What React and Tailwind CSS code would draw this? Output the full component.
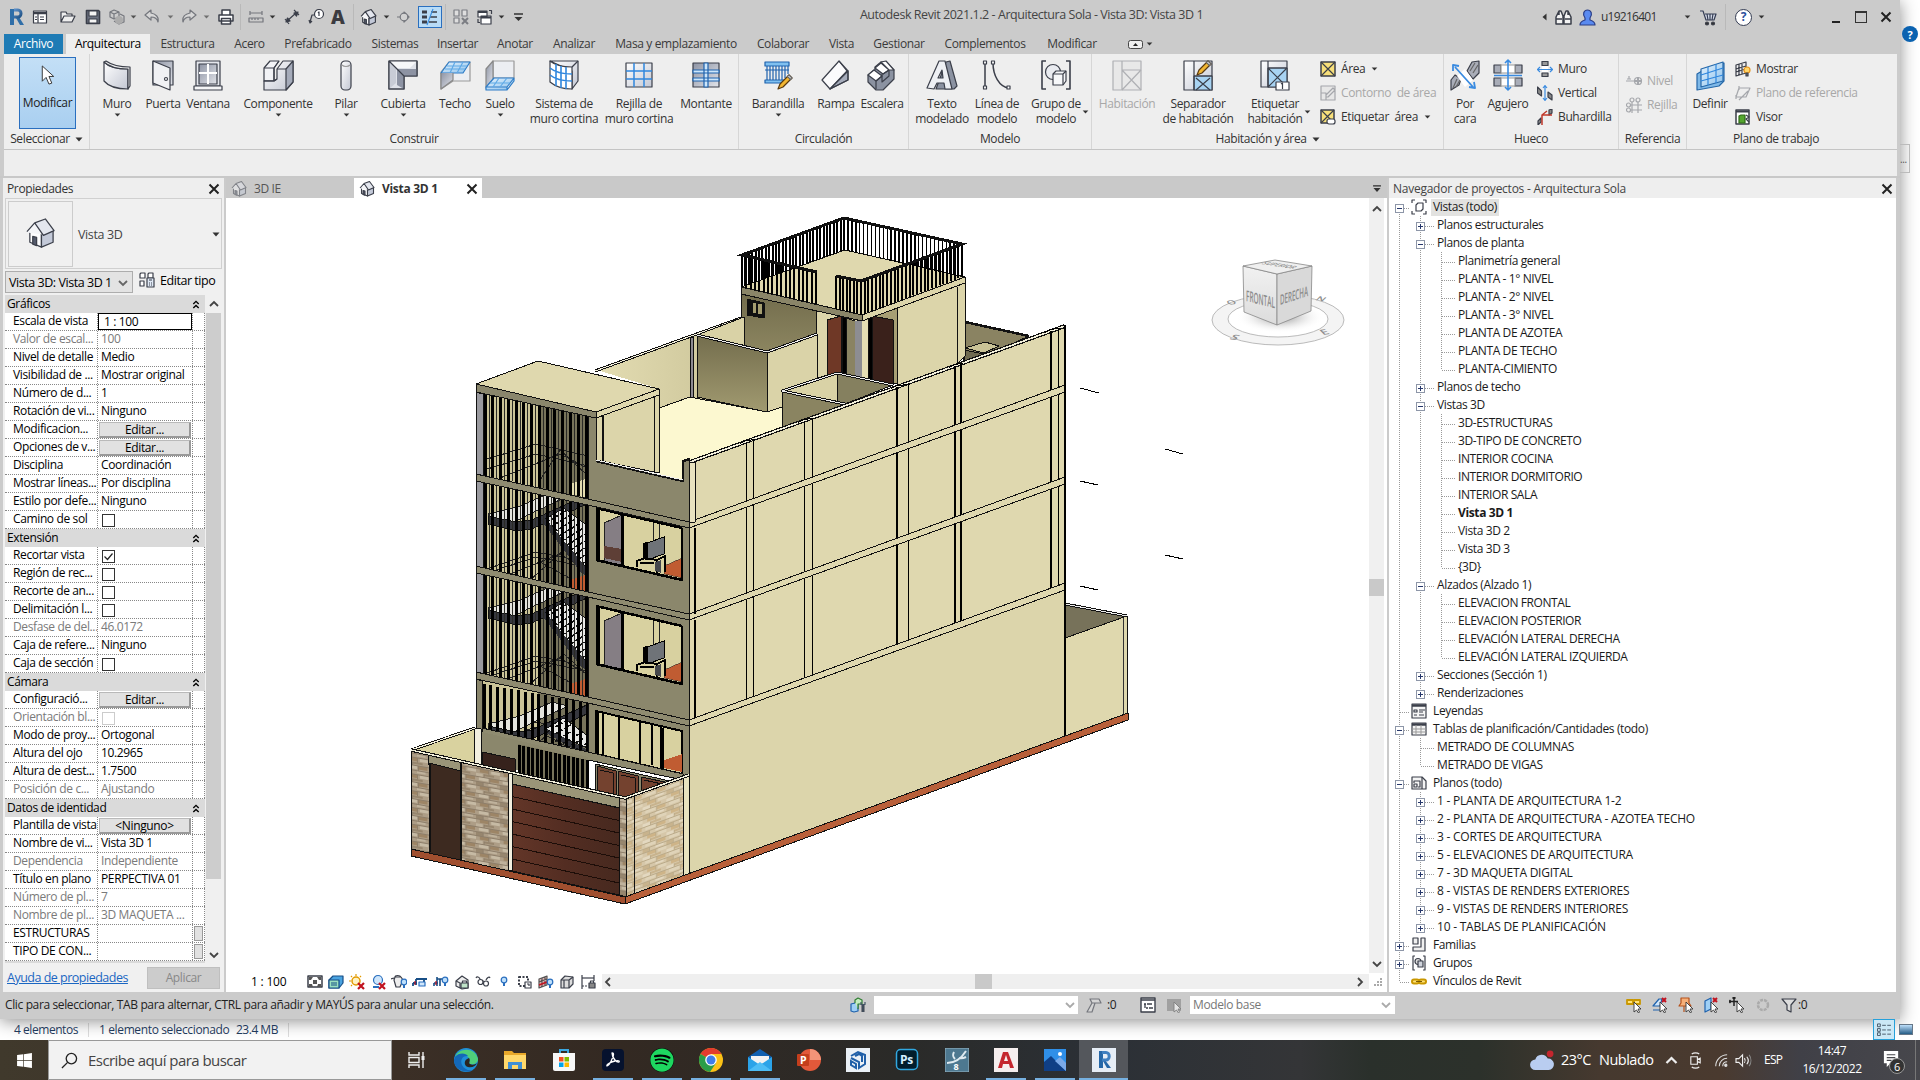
import React from "react";
import { FaSpotify, FaWindows } from "react-icons/fa";

const INK = "#3b3f4a";

/* ---------- Small helpers ---------- */

const Caret = ({ className = "" }) => (
  <svg viewBox="0 0 8 5" className={`h-[4px] w-[7px] shrink-0 ${className}`}>
    <path d="M0.5 0.5h7L4 4.5z" fill="#333" />
  </svg>
);

const Cross = ({ className = "" }) => (
  <svg viewBox="0 0 12 12" className={`size-[12px] shrink-0 ${className}`}>
    <path d="M1.5 1.5l9 9M10.5 1.5l-9 9" stroke="#222" strokeWidth="2" fill="none" />
  </svg>
);

const Chevron = ({ dir = "up", className = "", color = "#444" }) => {
  const d = {
    up: "M2 8l4-4 4 4",
    down: "M2 4l4 4 4-4",
    left: "M8 2L4 6l4 4",
    right: "M4 2l4 4-4 4",
  };
  return (
    <svg viewBox="0 0 12 12" className={`size-[12px] shrink-0 ${className}`}>
      <path d={d[dir]} stroke={color} strokeWidth="1.8" fill="none" />
    </svg>
  );
};

const Svg = ({ s = 16, className = "", children }) => (
  <svg
    viewBox={`0 0 ${s} ${s}`}
    width={s}
    height={s}
    className={`shrink-0 ${className}`}
    fill="none"
    stroke={INK}
    strokeWidth="1.2"
    strokeLinejoin="round"
  >
    {children}
  </svg>
);

const House = ({ size = 17, faded }) => (
  <svg
    viewBox="0 0 32 32"
    width={size}
    height={size}
    className={`shrink-0 ${faded ? "opacity-50" : ""}`}
    strokeLinejoin="round"
    stroke={INK}
    strokeWidth={size > 20 ? 1.3 : 2.2}
  >
    <path d="M5 14v11l12 5V17L10 7z" fill="#fdfdfe" />
    <path d="M17 17v13l12-5V13z" fill="#c3c9d8" />
    <path d="M2 15L10 5l8 12z" fill="#f4f5f8" stroke="none" />
    <path d="M2 14L10 5l9 13 11-5L21 1 10 5" fill="#e3e6ee" />
    <path d="M8 19v8l4 1.500V20z" fill="#555b6c" />
  </svg>
);

/* ---------- Title bar ---------- */

const Sep = ({ className = "" }) => (
  <div className={`h-[26px] w-px shrink-0 bg-[#b9b9b9] ${className}`} />
);

const QuickAccess = () => (
  <div className="flex h-[34px] w-[640px] items-center pl-[8px]">
    <svg viewBox="0 0 17 20" className="h-[20px] w-[17px]">
      <defs>
        <linearGradient id="rg" x1="0" y1="0" x2="1" y2="1">
          <stop offset="0" stopColor="#5b8fc9" />
          <stop offset="1" stopColor="#1f5286" />
        </linearGradient>
      </defs>
      <path d="M2 2h4v16H2zM11 10l5 8h-4l-4-7z" fill="#2f6ea8" />
      <path d="M6 3h4a3 3.500 0 010 7H6" fill="none" stroke="url(#rg)" strokeWidth="3" />
    </svg>
    <Svg className="ml-[7px]">
      <rect x="1.500" y="2" width="13" height="12" fill="#fff" />
      <path d="M1.500 4h13" strokeWidth="2.500" />
      <path d="M6 5v9M8 8h4M8 10.500h4M3 8h2M3 10.500h2" />
    </Svg>
    <Svg className="ml-[12px]">
      <path d="M1 13V3h5l1 2h5v2M1 13l3-6h11l-3 6z" fill="#eee" />
    </Svg>
    <Svg className="ml-[9px]">
      <path d="M1.500 1.500h12l1 1v12h-13z" fill="#6d7381" strokeWidth="1.600" />
      <path d="M4 2h8v5H4zM4 10h8v4H4z" fill="#f4f4f4" />
    </Svg>
    <Svg className="ml-[8px] opacity-60">
      <path d="M5 1l5 2v5L5 10 1 8V3zM11 5l4 2v6l-5 2-5-3" fill="#ccc" />
      <path d="M1 3l4 2 5-2M5 5v5" />
      <circle cx="10" cy="11" r="4" fill="#999" stroke="none" />
    </Svg>
    <Caret className="ml-[5px] opacity-80" />
    <Svg className="ml-[7px] opacity-60">
      <path d="M7 1L1 6l6 5V8c4 0 6 1 7 5 1-5-2-8-7-9z" fill="#e0e0e0" />
    </Svg>
    <Caret className="ml-[7px] opacity-60" />
    <Svg className="ml-[7px] opacity-60">
      <path d="M9 1l6 5-6 5V8c-4 0-6 1-7 5-1-5 2-8 7-9z" fill="#e0e0e0" />
    </Svg>
    <Caret className="ml-[6px] opacity-60" />
    <Svg className="ml-[8px]">
      <path d="M4 6V1h8v5M1 6h14v6H1zM3.500 9.500h9V15h-9z" fill="#fff" strokeWidth="1.500" />
    </Svg>
    <Sep className="ml-[6px]" />
    <Svg className="ml-[7px] opacity-60">
      <path d="M2 4h12M2 2v4M14 2v4M1 9h14v4H1zM4 9v2M7 9v2M10 9v2" />
    </Svg>
    <Caret className="ml-[5px]" />
    <Svg className="ml-[8px]">
      <path d="M3 12L12 4M1 10l4 5M10 1l5 5" />
      <path d="M2 13l1.500-4 2.500 3zM14 3l-4 1 2.500 3z" fill={INK} />
    </Svg>
    <Svg className="ml-[8px]">
      <circle cx="11" cy="5" r="4.500" fill="#fff" />
      <path d="M6.500 6H4L2 13M1 11l1 3 2-2" />
      <path d="M10 4l1-1v4" strokeWidth="1.200" />
    </Svg>
    <span className="ml-[7px] w-[16px] font-['Open_Sans',sans-serif] text-[19px] leading-none font-extrabold text-[#3b3b40]">
      A
    </span>
    <Sep className="ml-[6px]" />
    <span className="ml-[6px]">
      <House size={17} />
    </span>
    <Caret className="ml-[6px]" />
    <Svg className="ml-[6px] opacity-60">
      <path d="M1 8h3M8 3l5 5-5 5z" fill="#999" />
      <circle cx="8" cy="8" r="3.800" fill="#d8d8d8" />
    </Svg>
    <div className="ml-[6px] flex h-[22px] w-[24px] items-center justify-center border border-[#2a6fbf] bg-[#b9dcf7]">
      <Svg s={18}>
        <path d="M1 4h5M1 9h5M1 14h5" strokeWidth="3" />
        <path d="M10 4h6M9 9h7M8 14h8" strokeWidth="1.400" />
        <path d="M12 1L6 17" stroke="#3b8fe0" />
      </Svg>
    </div>
    <Sep className="ml-[3px]" />
    <Svg className="ml-[7px] opacity-55">
      <path d="M1 1h5v6H1zM9 1h5v6H9zM1 9h5v5H1z" fill="#eee" />
      <path d="M9 9l6 6M15 9l-6 6" strokeWidth="2" />
    </Svg>
    <Svg className="ml-[8px]">
      <path d="M1 2h9v6H1zM4 7h10v8H4z" fill="#fff" />
      <path d="M1 3h9M4 8.500h10" strokeWidth="2" />
      <path d="M12 1.500h2.500V5M1 10v3.500h2" />
    </Svg>
    <Caret className="ml-[5px]" />
    <svg viewBox="0 0 9 8" className="ml-[9px] h-[8px] w-[9px]">
      <path d="M0 1h9" stroke="#333" strokeWidth="1.500" />
      <path d="M0.500 4h8L4.500 8z" fill="#333" />
    </svg>
  </div>
);

const TitleBar = () => (
  <div className="flex h-[34px] shrink-0">
    <QuickAccess />
    <div className="w-[783px] pt-[6px] text-center text-[12.500px] leading-[18px] tracking-[-0.450px] text-[#444]">
      Autodesk Revit 2021.1.2 - Arquitectura Sola - Vista 3D: Vista 3D 1
    </div>
    <div className="flex flex-1 items-center pl-[119px]">
      <svg viewBox="0 0 5 8" className="h-[8px] w-[5px]">
        <path d="M4.500 0.500v7L0.500 4z" fill="#333" />
      </svg>
      <Svg s={17} className="ml-[8px]">
        <path d="M1 15V8l3-6h2l2 5v8H1zM9 15V7l2-5h2l3 6v7zM1 10h6M10 10h6M4 2v4M13 2v4" fill="#f3f3f3" strokeWidth="1.500" />
      </Svg>
      <Svg s={17} className="ml-[7px]">
        <path d="M1 16c0-3 2-4 5-5V9C3 5 5 1 8.500 1S14 5 11 9v2c3 1 5 2 5 5z" fill="#5a8af0" stroke="#2b3e86" />
      </Svg>
      <span className="ml-[5px] w-[76px] tracking-[-0.750px] text-[#333]">u19216401</span>
      <Caret className="ml-[7px]" />
      <Svg s={17} className="ml-[9px]">
        <path d="M0 2h3l3 9h8l2-6H5M7 5l1 6M10 5v6M13 5l-1 6" stroke="#333b52" fill="#d5dbe8" />
        <circle cx="7" cy="14.500" r="1.500" fill="#333" />
        <circle cx="13" cy="14.500" r="1.500" fill="#333" />
      </Svg>
      <Sep className="ml-[8px]" />
      <div className="ml-[9px] flex size-[17px] items-center justify-center rounded-full border-[1.500px] border-[#333b52] bg-white text-[12px] leading-none font-bold text-[#2b4f9c]">
        ?
      </div>
      <Caret className="ml-[6px]" />
      <div className="mt-[10px] ml-[67px] h-[2px] w-[8px] bg-[#222]" />
      <div className="ml-[15px] size-[12px] border border-t-2 border-[#333]" />
      <Cross className="ml-[13px]" />
    </div>
  </div>
);

const Tab = ({ className, children }) => (
  <div className={`flex h-[20px] shrink-0 items-center justify-center whitespace-nowrap ${className}`}>
    {children}
  </div>
);

const RibbonTabs = () => (
  <div className="flex h-[20px] shrink-0 pl-[4px] text-[#3a3a3a]">
    <Tab className="w-[59px] bg-[#1e7bb5] text-white">Archivo</Tab>
    <Tab className="ml-[3px] w-[84px] bg-[#eee] text-black">Arquitectura</Tab>
    <Tab className="w-[75px]">Estructura</Tab>
    <Tab className="w-[49px]">Acero</Tab>
    <Tab className="w-[88px]">Prefabricado</Tab>
    <Tab className="w-[66px]">Sistemas</Tab>
    <Tab className="w-[59px]">Insertar</Tab>
    <Tab className="w-[56px]">Anotar</Tab>
    <Tab className="w-[62px]">Analizar</Tab>
    <Tab className="w-[142px]">Masa y emplazamiento</Tab>
    <Tab className="w-[72px]">Colaborar</Tab>
    <Tab className="w-[45px]">Vista</Tab>
    <Tab className="w-[70px]">Gestionar</Tab>
    <Tab className="w-[102px]">Complementos</Tab>
    <Tab className="w-[72px]">Modificar</Tab>
    <Tab className="ml-[20px] w-[15px]">
      <svg viewBox="0 0 15 9" className="h-[9px] w-[15px]">
        <rect x="0.500" y="0.500" width="14" height="8" rx="2" fill="#eee" stroke="#444" />
        <path d="M5 6l2.500-3L10 6z" fill="#222" />
      </svg>
    </Tab>
    <Tab className="ml-[3px]">
      <Caret />
    </Tab>
  </div>
);

/* ---------- Ribbon icons (32px) ---------- */

const Pencil = ({ x = 0, y = 0 }) => (
  <g transform={`translate(${x} ${y})`}>
    <path d="M0 14l2-5L11 0l3 3-9 9z" fill="#f2b632" stroke="#5a3a10" />
    <path d="M9.500 1.500L11 0l3 3-1.500 1.500z" fill="#f4f4f4" stroke="#666" />
  </g>
);

const Grad = () => (
  <svg width="0" height="0" className="absolute">
    <defs>
      <linearGradient id="mt" x1="0" y1="0" x2="1" y2="1">
        <stop offset="0" stopColor="#ffffff" />
        <stop offset="1" stopColor="#c3c7d3" />
      </linearGradient>
      <linearGradient id="dk" x1="0" y1="0" x2="1" y2="1">
        <stop offset="0" stopColor="#8e94a4" />
        <stop offset="1" stopColor="#e2e4ea" />
      </linearGradient>
      <linearGradient id="bl" x1="0" y1="0" x2="1" y2="1">
        <stop offset="0" stopColor="#e6f3fd" />
        <stop offset="1" stopColor="#8cc1ec" />
      </linearGradient>
    </defs>
  </svg>
);

const big = {
  muro: (
    <Svg s={32}>
      <path d="M3 3c5 5 14 7 24 7v20C17 30 8 28 3 22z" fill="url(#mt)" />
      <path d="M3 3l2-1c7 5 14 6 24 6v19l-2 3V10C17 10 8 8 3 3z" fill="#eee" />
    </Svg>
  ),
  puerta: (
    <Svg s={32}>
      <path d="M6 2h20v24H6z" fill="url(#dk)" />
      <path d="M6 2l17 7v22L6 24z" fill="#f0f1f4" />
      <circle cx="19" cy="20" r="1.500" fill="#fff" />
    </Svg>
  ),
  ventana: (
    <Svg s={32}>
      <path d="M4 2h24v25H4z" fill="#e4e6ec" />
      <path d="M7 5h18v20H7z" fill="url(#dk)" />
      <path d="M16 5v20M7 14h18" stroke="#fff" strokeWidth="2" />
      <path d="M2 27h28v4H2z" fill="#f4f5f7" />
    </Svg>
  ),
  componente: (
    <Svg s={32}>
      <path d="M2 9l6-7h9l-5 7v13H2z" fill="#f2f3f6" />
      <path d="M15 10l6-8h10v21l-7 8H2v-9h10l3-2z" fill="url(#mt)" />
      <path d="M24 10l7-8v21l-7 8z" fill="#a5abba" />
      <path d="M2 9h10l5-7M15 10h9M12 22h-10M12 9v13l3-2" />
    </Svg>
  ),
  pilar: (
    <Svg s={32}>
      <rect x="11" y="2" width="10" height="29" rx="4" fill="url(#mt)" />
      <path d="M12 6c2 2 6 2 8 0" stroke="#999" />
    </Svg>
  ),
  cubierta: (
    <Svg s={32}>
      <path d="M2 2h28v15H17v13H2z" fill="#dfe2e9" />
      <path d="M2 2l8 8h20v7H17v13l-7-4V10z" fill="#8d93a3" stroke="none" />
      <path d="M2 2h28L23 9H10z" fill="#f6f7f9" stroke="none" />
      <path d="M2 2l7 8v14l-7 6z" fill="#c8ccd6" stroke="none" />
      <path d="M2 2h28v15H17v13H2zM2 2l15 15" />
    </Svg>
  ),
  techo: (
    <Svg s={32}>
      <path d="M2 13l8-10h21v19H14L2 30z" fill="#eceef2" stroke="#999" />
      <path d="M2 14l8-11h21l-7 11z" fill="url(#bl)" stroke="#2f7dc7" />
      <path d="M8 7h20M6 10h20M16 3l-5 11M24 3l-6 11" stroke="#5fa9e6" />
      <path d="M2 14v16l12-9v-7" fill="url(#dk)" stroke="#888" />
    </Svg>
  ),
  suelo: (
    <Svg s={32}>
      <path d="M9 2h21v17H9z" fill="#eceef2" stroke="#999" />
      <path d="M2 10l7-8v18l-7 9z" fill="url(#dk)" stroke="#888" />
      <path d="M2 28l8-9h20l-7 9zM2 28h21v3H2zM23 31l7-9v-3" fill="url(#bl)" stroke="#2f7dc7" />
      <path d="M6 24h20M15 19l-6 9M23 19l-7 9" stroke="#5fa9e6" />
    </Svg>
  ),
  sistema: (
    <Svg s={32}>
      <path d="M2 2h28v20l-6 8V12z" fill="url(#mt)" />
      <path d="M2 2c6 5 13 6 22 6v22c-9 0-16-2-22-7z" fill="#fff" />
      <path d="M24 8l6-6" />
      <path d="M2 9c6 5 13 6 22 6M2 16c6 5 13 6 22 6M8 5v22M13 7v22M18 8v22" stroke="#2f86dd" strokeWidth="1.600" />
    </Svg>
  ),
  rejilla: (
    <Svg s={32}>
      <path d="M3 4h26v24H3z" fill="url(#mt)" />
      <path d="M3 12h26M3 20h26M11 4v24M21 4v24" stroke="#2f86dd" strokeWidth="1.500" />
    </Svg>
  ),
  montante: (
    <Svg s={32}>
      <path d="M3 4h26v24H3z" fill="url(#dk)" />
      <path d="M3 11h26v3H3zM3 19h26v3H3zM14 4h4v24h-4z" fill="#cde6fa" stroke="#1f62ad" />
    </Svg>
  ),
  barandilla: (
    <Svg s={32}>
      <path d="M3 3h24v4H3zM3 21h20v3H3z" fill="#7fc0f0" stroke="#1f62ad" />
      <path d="M5 7v14M8 7v14M11 7v14M14 7v14M17 7v14M20 7v14M23 7v12M26 7v8M3 11h24" stroke="#1f62ad" />
      <Pencil x={16} y={16} />
    </Svg>
  ),
  rampa: (
    <Svg s={32}>
      <path d="M2 21L19 2l8 10v0L10 30z" fill="#fbfbfc" />
      <path d="M10 30L28 12v9z" fill="#a5abba" />
      <path d="M19 2l9 10v9L10 30" />
    </Svg>
  ),
  escalera: (
    <Svg s={32}>
      <path d="M2 23V16l6-5 1 0V8l6-5h5l8 8v9L17 31h-7z" fill="#8b92a1" />
      <path d="M2 16l6-5 8 6-6 5zM9 9l6-5 8 7-6 4zM15 3l5-1 8 9-5 0z" fill="#fff" />
      <path d="M10 22l6-5v-2M10 22v8M17 15l6-4M16 17v6l7-6v-6" />
    </Svg>
  ),
  texto: (
    <Svg s={32}>
      <path d="M10 30L20 3l4-1 7 25-3 3z" fill="#8b92a1" />
      <path d="M1 29L13 2h6l7 28h-7l-1-6h-7l-3 6zM12 19h5l-1-8z" fill="#eef0f4" />
    </Svg>
  ),
  linea: (
    <Svg s={32}>
      <path d="M4 4v25M12 4c0 12 6 24 16 25" strokeWidth="1.500" />
      <path d="M2.500 2h3v3h-3zM2.500 27h3v3h-3zM10.500 2h3v3h-3zM26 27h3v3h-3z" fill="#fff" />
    </Svg>
  ),
  grupo: (
    <Svg s={32}>
      <path d="M6 2H2v28h4M26 2h4v28h-4" strokeWidth="1.600" />
      <circle cx="13" cy="13" r="7.500" fill="#e9ebf0" />
      <path d="M13 15l3-3h10v10l-3 4H13z" fill="#f7f8fa" />
      <path d="M13 15h10l3-3M23 15v11" />
    </Svg>
  ),
  habitacion: (
    <Svg s={32} className="opacity-35">
      <path d="M2 2h28v29H2z" fill="#ddd" />
      <path d="M11 2v29M11 11h19M11 11l19 20M30 11L11 31" />
    </Svg>
  ),
  separador: (
    <Svg s={32}>
      <path d="M2 2h28v29H2z" fill="url(#mt)" />
      <path d="M12 17h18v14H12z" fill="#a8d3f2" />
      <path d="M12 2v29M12 17h18M14 19l14 12M28 19L14 31" />
      <Pencil x={15} y={2} />
    </Svg>
  ),
  etiquetar: (
    <Svg s={32}>
      <path d="M2 2h26v26H2z" fill="url(#mt)" />
      <path d="M9 9h19v19H9z" fill="#a8d3f2" />
      <path d="M9 2v26M9 9h19M9 9l19 19M28 9L9 28" />
      <rect x="17" y="23" width="13" height="8" fill="#fff" />
      <path d="M22 25l1.500-1v6" />
    </Svg>
  ),
  cara: (
    <Svg s={32}>
      <path d="M18 12l5-9 7-1v12l-6 6zM2 31V21l4-5 6 4-2 6z" fill="#a9adb8" />
      <path d="M21 12l5-8M24 14l5-8M4 29l4-9M7 28l4-7" stroke="#666" />
      <path d="M8 17l8-7 8 11-8 7z" fill="#fff" stroke="none" />
      <path d="M6 8l18 20M4 12V6l6 1M20 28l6 1-1-6" stroke="#3a8be0" strokeWidth="1.800" />
    </Svg>
  ),
  agujero: (
    <Svg s={32}>
      <path d="M2 6h7v8H2zM23 6h7v8h-7zM2 19h7v8H2zM23 19h7v8h-7z" fill="#a9adb8" />
      <path d="M9 6h14v8H9zM9 19h14v8H9z" fill="#fff" stroke="#999" />
      <path d="M2 16.500h28M16 1v30M13 4l3-3 3 3M13 28l3 3 3-3" stroke="#3a8be0" strokeWidth="1.600" />
    </Svg>
  ),
  definir: (
    <Svg s={32}>
      <path d="M3 15l5-3 22-8v18l-5 5-22 4z" fill="#7fb9e8" stroke="#2567a8" />
      <path d="M7 10l22-7v19L7 28z" fill="url(#bl)" stroke="#2567a8" />
      <path d="M7 16l22-7M7 22l22-6M14 8v18M22 5v19" stroke="#2f86dd" />
    </Svg>
  ),
};

const small = {
  area: (
    <Svg>
      <path d="M1 1h14v14H1z" fill="#f7df7a" strokeWidth="1.500" />
      <path d="M1 1l14 14M15 1L1 15" />
    </Svg>
  ),
  contorno: (
    <Svg className="opacity-40">
      <path d="M1 1h14v14H1zM1 8h5v7M6 10l7-7 2 2-7 7H6z" fill="#ddd" />
    </Svg>
  ),
  etarea: (
    <Svg>
      <path d="M1 1h13v13H1z" fill="#f7df7a" strokeWidth="1.500" />
      <path d="M1 1l13 13M14 1L1 14" />
      <rect x="7" y="10" width="8" height="5" rx="2" fill="#fff" />
    </Svg>
  ),
  muro: (
    <Svg>
      <path d="M5 0.500h6v4H5zM5 12h6v3.500H5z" fill="#999" />
      <path d="M5 5h6v6H5z" fill="#fff" stroke="none" />
      <path d="M0 8.500h16M3 6L0.500 8.500 3 11M13 6l2.500 2.500L13 11" stroke="#3a8be0" />
    </Svg>
  ),
  vertical: (
    <Svg>
      <path d="M0.500 2l4 4v5l-4-3zM11 7l4 3v5l-4-3z" fill="#888" />
      <path d="M8 0.500v15M6 3l2-2.500L10 3M6 13l2 2.500 2-2.500" stroke="#3a8be0" />
    </Svg>
  ),
  buhardilla: (
    <Svg>
      <path d="M1 12l3-3v4l-3 3zM12 1l3-1v4l-3 2z" fill="#888" />
      <path d="M5 16V6h10M5 6l5-4" stroke="#c0392b" strokeWidth="1.500" />
    </Svg>
  ),
  nivel: (
    <Svg className="opacity-40">
      <path d="M0 8h9M3 3v3M1 6h4" />
      <circle cx="12" cy="8" r="3.500" />
      <path d="M12 4v8M8 8h8" strokeWidth="2" />
    </Svg>
  ),
  rejilla: (
    <Svg className="opacity-40">
      <path d="M6 5v11M12 5v11M5 8h11M5 13h11" />
      <circle cx="6" cy="3" r="2" />
      <circle cx="12" cy="3" r="2" />
      <circle cx="2.500" cy="8" r="2" />
      <circle cx="2.500" cy="13" r="2" />
    </Svg>
  ),
  mostrar: (
    <Svg>
      <path d="M1 4l10-3v11L1 15zM4 3v11M7 2v11M1 8l10-3M1 11l10-3" />
      <circle cx="12" cy="9" r="3" fill="#ffd66b" stroke="#e8951c" />
      <path d="M11 12h2v3h-2z" fill="#777" />
    </Svg>
  ),
  plano: (
    <Svg className="opacity-40">
      <path d="M4 3h11l-4 9H1zM4 1v4M1 10v4M4 15l9-9" />
    </Svg>
  ),
  visor: (
    <Svg>
      <path d="M1 1h13v14H1z" fill="#fff" strokeWidth="1.500" />
      <path d="M1 2.500h13" strokeWidth="2" />
      <path d="M4 7l2-1h4v8H4z" fill="#55a630" stroke="#2f6b17" />
      <path d="M11 6l3 2-3 2 3 3" />
    </Svg>
  ),
};

const BigButton = ({ icon, lines, caret, sideCaret, disabled, className = "" }) => (
  <div className={`flex shrink-0 flex-col items-center pt-[5px] ${className}`}>
    {big[icon]}
    <div
      className={`relative mt-[5px] text-center leading-[15px] whitespace-nowrap ${
        disabled ? "text-[#a8a8a8]" : "text-[#333]"
      }`}
    >
      {lines.map((l) => (
        <div key={l}>{l}</div>
      ))}
      {sideCaret && <Caret className="absolute top-[14px] -right-[8px] h-[3px] w-[6px]" />}
    </div>
    {caret && <Caret className="mt-[2px] h-[3px] w-[6px]" />}
  </div>
);

const SmallButton = ({ icon, label, caret, disabled }) => (
  <div className={`flex h-[24px] items-center whitespace-pre ${disabled ? "text-[#a8a8a8]" : "text-[#333]"}`}>
    {small[icon]}
    <span className="ml-[5px]">{label}</span>
    {caret && <Caret className="ml-[6px] h-[3px] w-[6px]" />}
  </div>
);

const Panel = ({ title, caret, className, children }) => (
  <div className={`flex h-[95px] shrink-0 flex-col border-r border-[#d6d6d6] ${className}`}>
    <div className="flex h-[77px]">{children}</div>
    <div className="flex h-[16px] items-center justify-center gap-[5px] text-[#333]">
      {title}
      {caret && <Caret className="h-[5px] w-[8px]" />}
    </div>
  </div>
);

const Ribbon = () => (
  <div className="ml-[4px] flex h-[96px] w-[1893px] shrink-0 border-b border-[#c4c4c4] bg-[#eee]">
    <Panel title="Seleccionar" caret className="w-[86px]">
      <div className="mt-[3px] ml-[15px] flex h-[72px] w-[57px] flex-col items-center border border-[#2a6fbf] bg-gradient-to-b from-[#c3dff6] to-[#a9cff0] pt-[7px]">
        <svg viewBox="0 0 14 22" className="h-[21px] w-[14px]">
          <path d="M1 1v16l4-4 3 7 3-1-3-7h5z" fill="#fff" stroke="#333" />
        </svg>
        <div className="mt-[9px] leading-[15px] text-[#222]">Modificar</div>
      </div>
    </Panel>
    <Panel title="Construir" className="w-[649px]">
      <BigButton icon="muro" lines={["Muro"]} caret className="ml-[7px] w-[40px]" />
      <BigButton icon="puerta" lines={["Puerta"]} className="ml-[6px] w-[40px]" />
      <BigButton icon="ventana" lines={["Ventana"]} className="ml-[2px] w-[46px]" />
      <BigButton icon="componente" lines={["Componente"]} caret className="ml-[9px] w-[76px]" />
      <BigButton icon="pilar" lines={["Pilar"]} caret className="ml-[14px] w-[32px]" />
      <BigButton icon="cubierta" lines={["Cubierta"]} caret className="ml-[16px] w-[50px]" />
      <BigButton icon="techo" lines={["Techo"]} className="ml-[9px] w-[36px]" />
      <BigButton icon="suelo" lines={["Suelo"]} caret className="ml-[9px] w-[36px]" />
      <BigButton icon="sistema" lines={["Sistema de", "muro cortina"]} className="ml-[10px] w-[72px]" />
      <BigButton icon="rejilla" lines={["Rejilla de", "muro cortina"]} className="ml-[3px] w-[72px]" />
      <BigButton icon="montante" lines={["Montante"]} className="ml-[3px] w-[56px]" />
    </Panel>
    <Panel title="Circulación" className="w-[170px]">
      <BigButton icon="barandilla" lines={["Barandilla"]} caret className="ml-[11px] w-[56px]" />
      <BigButton icon="rampa" lines={["Rampa"]} className="ml-[10px] w-[40px]" />
      <BigButton icon="escalera" lines={["Escalera"]} className="ml-[3px] w-[46px]" />
    </Panel>
    <Panel title="Modelo" className="w-[183px]">
      <BigButton icon="texto" lines={["Texto", "modelado"]} className="ml-[5px] w-[56px]" />
      <BigButton icon="linea" lines={["Línea de", "modelo"]} className="ml-[4px] w-[46px]" />
      <BigButton icon="grupo" lines={["Grupo de", "modelo"]} sideCaret className="ml-[10px] w-[52px]" />
    </Panel>
    <Panel title="Habitación y área" caret className="w-[352px]">
      <BigButton icon="habitacion" lines={["Habitación"]} disabled className="ml-[5px] w-[60px]" />
      <BigButton icon="separador" lines={["Separador", "de habitación"]} className="ml-[4px] w-[74px]" />
      <BigButton icon="etiquetar" lines={["Etiquetar", "habitación"]} sideCaret className="ml-[10px] w-[60px]" />
      <div className="ml-[15px] flex flex-col pt-[3px]">
        <SmallButton icon="area" label="Área" caret />
        <SmallButton icon="contorno" label="Contorno  de área" disabled />
        <SmallButton icon="etarea" label="Etiquetar  área" caret />
      </div>
    </Panel>
    <Panel title="Hueco" className="w-[175px]">
      <BigButton icon="cara" lines={["Por", "cara"]} className="ml-[5px] w-[32px]" />
      <BigButton icon="agujero" lines={["Agujero"]} className="ml-[4px] w-[46px]" />
      <div className="ml-[6px] flex flex-col pt-[3px]">
        <SmallButton icon="muro" label="Muro" />
        <SmallButton icon="vertical" label="Vertical" />
        <SmallButton icon="buhardilla" label="Buhardilla" />
      </div>
    </Panel>
    <Panel title="Referencia" className="w-[68px]">
      <div className="ml-[7px] flex flex-col pt-[15px]">
        <SmallButton icon="nivel" label="Nivel" disabled />
        <SmallButton icon="rejilla" label="Rejilla" disabled />
      </div>
    </Panel>
    <Panel title="Plano de trabajo" className="w-[210px] border-r-0 pr-[32px]">
      <BigButton icon="definir" lines={["Definir"]} className="ml-[3px] w-[40px]" />
      <div className="ml-[5px] flex flex-col pt-[3px]">
        <SmallButton icon="mostrar" label="Mostrar" />
        <SmallButton icon="plano" label="Plano de referencia" disabled />
        <SmallButton icon="visor" label="Visor" />
      </div>
    </Panel>
  </div>
);

/* ---------- Properties palette ---------- */

const properties = [
  { head: "Gráficos" },
  { label: "Escala de vista", value: "1 : 100", type: "input" },
  { label: "Valor de escal...", value: "100", dim: true },
  { label: "Nivel de detalle", value: "Medio" },
  { label: "Visibilidad de ...", value: "Mostrar original" },
  { label: "Número de d...", value: "1" },
  { label: "Rotación de vi...", value: "Ninguno" },
  { label: "Modificacion...", value: "Editar...", type: "button" },
  { label: "Opciones de v...", value: "Editar...", type: "button" },
  { label: "Disciplina", value: "Coordinación" },
  { label: "Mostrar líneas...", value: "Por disciplina" },
  { label: "Estilo por defe...", value: "Ninguno" },
  { label: "Camino de sol", type: "check" },
  { head: "Extensión" },
  { label: "Recortar vista", type: "check", on: true },
  { label: "Región de rec...", type: "check" },
  { label: "Recorte de an...", type: "check" },
  { label: "Delimitación l...", type: "check" },
  { label: "Desfase de del...", value: "46.0172", dim: true },
  { label: "Caja de refere...", value: "Ninguno" },
  { label: "Caja de sección", type: "check" },
  { head: "Cámara" },
  { label: "Configuració...", value: "Editar...", type: "button" },
  { label: "Orientación bl...", type: "check", dim: true },
  { label: "Modo de proy...", value: "Ortogonal" },
  { label: "Altura del ojo", value: "10.2965" },
  { label: "Altura de dest...", value: "1.7500" },
  { label: "Posición de c...", value: "Ajustando", dim: true },
  { head: "Datos de identidad" },
  { label: "Plantilla de vista", value: "<Ninguno>", type: "button" },
  { label: "Nombre de vi...", value: "Vista 3D 1" },
  { label: "Dependencia", value: "Independiente", dim: true },
  { label: "Título en plano", value: "PERPECTIVA 01" },
  { label: "Número de pl...", value: "7", dim: true },
  { label: "Nombre de pl...", value: "3D MAQUETA ...", dim: true },
  { label: "ESTRUCTURAS", value: "", knob: true },
  { label: "TIPO DE CON...", value: "", knob: true },
];

const PropertyValue = ({ row }) => {
  if (row.type === "input")
    return (
      <div className="flex h-[17px] w-full items-center border border-black pl-[5px]">{row.value}</div>
    );
  if (row.type === "button")
    return (
      <div className="mt-[1px] ml-[1px] flex h-[16px] w-[92px] items-center justify-center border border-r-2 border-b-2 border-[#b9b9b9] border-r-[#999] border-b-[#999] bg-[#e1e1e1]">
        {row.value}
      </div>
    );
  if (row.type === "check")
    return (
      <svg viewBox="0 0 13 13" className="mt-[2px] ml-[4px] size-[13px]">
        <rect x="0.500" y="0.500" width="12" height="12" fill="#fff" stroke={row.dim ? "#ccc" : "#333"} />
        {row.on && <path d="M2.500 6.500l3 3 5-6" fill="none" stroke="#222" strokeWidth="1.200" />}
      </svg>
    );
  return <span className="pl-[3px]">{row.value}</span>;
};

const PropertyRow = ({ row }) => {
  if (row.head)
    return (
      <div className="flex h-[18px] items-center justify-between bg-[#dadada] pr-[5px] pl-[2px]">
        <span>{row.head}</span>
        <svg viewBox="0 0 8 10" className="h-[9px] w-[8px]">
          <path d="M1 4.500l3-3 3 3M1 9l3-3 3 3" fill="none" stroke="#000" strokeWidth="1.500" />
        </svg>
      </div>
    );
  return (
    <div className={`flex h-[18px] border-b border-dotted border-[#888] ${row.dim ? "text-[#7a7a7a]" : "text-black"}`}>
      <div className="flex w-[93px] items-center overflow-hidden border-r border-dotted border-[#888] pb-px pl-[8px] whitespace-nowrap">
        {row.label}
      </div>
      <div
        className={`flex w-[95px] items-center overflow-hidden border-r border-dotted border-[#888] whitespace-nowrap ${
          row.type ? "" : "pb-px"
        }`}
      >
        <PropertyValue row={row} />
      </div>
      <div className="w-[12px] border-r border-dotted border-[#888]">
        {row.knob && <div className="mt-px ml-px h-[15px] w-[9px] border border-[#999] bg-[#e1e1e1]" />}
      </div>
    </div>
  );
};

const Properties = () => (
  <div className="flex h-[814px] w-[221px] shrink-0 flex-col bg-[#f0f0f0] text-black">
    <div className="flex h-[20px] items-center justify-between bg-[#eee] pt-[2px] pr-[4px] pl-[4px] text-[#333]">
      <span>Propiedades</span>
      <Cross className="size-[11px]" />
    </div>
    <div className="ml-[2px] flex h-[71px] w-[217px] items-center border border-[#d0d0d0] pl-[2px]">
      <div className="flex h-[66px] w-[65px] items-center justify-center border border-[#ccc]">
        <House size={31} />
      </div>
      <span className="mt-[2px] ml-[5px] flex-1 text-[12.500px] text-[#444]">Vista 3D</span>
      <Caret className="mt-[2px] mr-[1px] h-[5px] w-[8px]" />
    </div>
    <div className="flex h-[26px] items-start pt-[2px] pl-[2px]">
      <div className="flex h-[22px] w-[128px] items-center justify-between border border-[#adadad] bg-[#e3e3e3] pt-px pr-[3px] pl-[3px] text-[12.500px] tracking-[-0.450px]">
        <span>Vista 3D: Vista 3D 1</span>
        <Chevron dir="down" color="#666" className="size-[11px]" />
      </div>
      <Svg className="mt-[1px] ml-[6px]">
        <path d="M1 2l1-1h4v5H1zM9 2l1-1h4v5H9zM1 9h4v5H1z" fill="#fff" />
        <path d="M8 6h7v9H8z" fill="#dfe8f5" />
        <path d="M10 8h3M10 11h1M12 11h1M10 13h1M12 13h1" />
      </Svg>
      <span className="mt-[2px] ml-[5px] text-[12.500px] tracking-[-0.450px]">Editar tipo</span>
    </div>
    <div className="flex h-[668px] pl-[2px]">
      <div className="w-[200px] bg-white">
        {properties.map((row, i) => (
          <PropertyRow key={i} row={row} />
        ))}
        <div className="h-[2px] bg-[#dadada]" />
      </div>
      <div className="ml-px flex w-[15px] flex-col items-center bg-[#f0f0f0]">
        <Chevron dir="up" className="mt-[3px] size-[11px]" />
        <div className="mt-[3px] h-[566px] w-[15px] bg-[#cdcdcd]" />
        <Chevron dir="down" className="mt-auto mb-[2px] size-[11px]" />
      </div>
    </div>
    <div className="flex flex-1 items-center pl-[4px]">
      <span className="text-[12.500px] tracking-[-0.500px] text-[#1a66c2] underline">Ayuda de propiedades</span>
      <div className="mr-[4px] ml-auto flex h-[22px] w-[73px] items-center justify-center border border-[#bfbfbf] bg-[#ccc] text-[#888]">
        Aplicar
      </div>
    </div>
  </div>
);

/* ---------- Building drawing ---------- */

const lerp = (a, b, t) => a + (b - a) * t;

// evenly spaced vertical bars between two slanted edges
const Bars = ({ x1, x2, top, bottom, n, w = 1.2, color = "#000" }) => (
  <g stroke={color} strokeWidth={w}>
    {Array.from({ length: n + 1 }, (_, i) => {
      const t = i / n;
      const x = lerp(x1, x2, t);
      return <line key={i} x1={x} x2={x} y1={lerp(top[0], top[1], t)} y2={lerp(bottom[0], bottom[1], t)} />;
    })}
  </g>
);

const StairFloor = ({ y, h }) => (
  <g>
    {/* floor edge and handrails seen through the bars */}
    <path
      d={`M484 ${y + h - 8}l52 -17 52 10M484 ${y + h - 12}l52 -18 30 6M500 ${y + h - 4}l60 -24 27 16M530 ${y + h - 2}l34 -30 22 20M540 ${y + h - 20}l44 24`}
      stroke="#222"
      fill="none"
    />
    {/* landing */}
    <path d={`M488 ${y + 24}l32 -8 32 -14 16 4 -38 18 -16 8 -26 -2z`} fill="#e4e4de" stroke="#222" />
    <path d={`M488 ${y + 26}l28 6 16 -2 57 -26v9l-57 26 -16 2 -28 -7z`} fill="#37383e" stroke="#111" />
    {/* flight of steps */}
    <path d={`M544 ${y + 30}l20 -12 24 18v${Math.min(44, h - 40)}z`} fill="#e9e9e6" stroke="#111" />
    <path d={`M541 ${y + 30}l4 -2 43 ${Math.min(52, h - 30)}v6l-6 -2z`} fill="#34353b" />
    {Array.from({ length: h > 60 ? 10 : 6 }, (_, i) => (
      <path
        key={i}
        d={`M${547 + i * 4} ${y + 32 + i * 4.6}l${Math.min(20, 588 - 547 - i * 4)} ${-Math.min(12, (41 - i * 4) * 0.6)}`}
        stroke="#111"
        strokeWidth="1.5"
        strokeDasharray="3 2"
      />
    ))}
  </g>
);

const RoomWindow = ({ y, h }) => (
  <g>
    <path d={`M596 ${y}l86 20v${h}l-86 -20z`} fill="#d8d1a0" stroke="#000" />
    <path d={`M596 ${y + 1}l4 1v${h}l-4 -1z`} fill="#000" />
    <path d={`M604 ${y + 15}l18 -8v${h - 1}l-18 -4z`} fill="#857e84" stroke="#222" />
    {h < 55 && <path d={`M604 ${y + 38}l18 3v13l-18 -4z`} fill="#5e3f36" />}
    <path d={`M621 ${y + 7}h3v${h}h-3z`} fill="#000" />
    <path d={`M653 ${y + 14}v${h - 32}M659 ${y + 16}v${h - 34}`} stroke="#222" />
    <path d={`M664 ${y + h + 6}l18 -8v20l-18 -4z`} fill="#c05c32" stroke="#222" strokeWidth="0.5" />
    <path d={`M647 ${y + h - 17}l17 -6v17l-17 6z`} fill="#6f7378" stroke="#000" />
    <path d={`M643 ${y + h - 17}l4 -1v18l-4 -1z`} fill="#000" />
    <path
      d={`M637 ${y + h + 7}v-6l8 -3 12 2 8 -4v16M640 ${y + h + 3}h14M657 ${y + h}v13`}
      stroke="#000"
      strokeWidth="2"
      fill="none"
    />
    <path d={`M655 ${y + h + 2}l6 -2v13l-6 -2z`} fill="#45474c" />
    <path d={`M596 ${y}l86 20M596 ${y + h}l86 20`} stroke="#000" strokeWidth="2.5" fill="none" />
    <path d={`M682 ${y + 20}v${h}`} stroke="#000" strokeWidth="1.500" />
  </g>
);

const Building = () => {
  const topY = (x) => 461 - (135 * (x - 695)) / 370;
  const pilasters = [
    [746, 753, 1, 1],
    [804, 812, 1, 1],
    [897, 908, 1.5, 1],
    [955, 961, 2, 2],
    [1051, 1058, 2, 1],
  ];
  const bandAt = (l, r, x) => lerp(l, r, (x - 695) / 370);
  return (
    <svg
      viewBox="226 198 1143 774"
      width="1143"
      height="774"
      className="shrink-0"
      fontFamily="Open Sans, sans-serif"
      shapeRendering="crispEdges"
    >
      <defs>
        <pattern id="stone" width="34" height="24" patternUnits="userSpaceOnUse" patternTransform="skewY(10) scale(0.7)">
          <rect width="34" height="24" fill="#ad9d86" />
          <path d="M0 0h10v4H0zM18 12h12v4H18z" fill="#bfb29c" />
          <path d="M12 0h14v3H12zM0 13h9v4H0z" fill="#97866e" />
          <path d="M4 6h14v4H4zM22 18h12v5H22z" fill="#c6baa4" />
          <path d="M21 5h12v5H21zM6 19h12v4H6z" fill="#9d8566" />
          <path d="M0 4.500h34M0 11.500h34M0 17.500h34M11 0v4M20 5v6M10 12v5M19 18v6" stroke="#857763" strokeWidth="0.800" />
        </pattern>
        <pattern id="stoneR" width="34" height="24" patternUnits="userSpaceOnUse" patternTransform="skewY(-20) scale(0.7)">
          <rect width="34" height="24" fill="#d6c7a9" />
          <path d="M0 0h10v4H0zM18 12h12v4H18z" fill="#e3d8c0" />
          <path d="M12 0h14v3H12zM0 13h9v4H0z" fill="#c8b38d" />
          <path d="M4 6h14v4H4zM22 18h12v5H22z" fill="#dfd3b8" />
          <path d="M21 5h12v5H21zM6 19h12v4H6z" fill="#ceb488" />
          <path d="M0 4.500h34M0 11.500h34M0 17.500h34M11 0v4M20 5v6M10 12v5M19 18v6" stroke="#b3a281" strokeWidth="0.800" />
        </pattern>
        <linearGradient id="darkWall" x1="0" y1="0" x2="0" y2="1">
          <stop offset="0" stopColor="#736d4d" />
          <stop offset="1" stopColor="#a19a70" />
        </linearGradient>
        <linearGradient id="inWall" x1="0" y1="0" x2="1" y2="0">
          <stop offset="0" stopColor="#e3dcb2" />
          <stop offset="1" stopColor="#c9c296" />
        </linearGradient>
        <linearGradient id="wood" x1="0" y1="0" x2="1" y2="0">
          <stop offset="0" stopColor="#633628" />
          <stop offset="0.500" stopColor="#532d22" />
          <stop offset="1" stopColor="#47291f" />
        </linearGradient>
        <radialGradient id="cubeShade" cx="0.5" cy="0.5" r="0.5">
          <stop offset="0" stopColor="#555" stopOpacity="0.700" />
          <stop offset="1" stopColor="#fff" stopOpacity="0" />
        </radialGradient>
        <linearGradient id="cubeFace" x1="0" y1="0" x2="0" y2="1">
          <stop offset="0" stopColor="#f1f1f1" />
          <stop offset="1" stopColor="#dcdcdc" />
        </linearGradient>
      </defs>

      {/* level marks */}
      <path d="M1080 388l19 5M1080 481l18 4M1080 586l18 4M1165 449l18 5M1165 555l18 4" stroke="#000" />

      <g stroke="#111" strokeWidth="1" strokeLinejoin="round">
        {/* right annex */}
        <path d="M1065 604l62 13-62 22z" fill="#77725a" />
        <path d="M1065 638l62-22v101l-62 22z" fill="#dfd8ae" />
        <path d="M1065 604l62 12" stroke="#111" strokeWidth="3" fill="none" />
        <path d="M1065 604l62 12" stroke="#eee" fill="none" />
        <path d="M1123 618v98" stroke="#333" />

        {/* roof terrace behind */}
        <path d="M965 322l64 14-30 14-36 18z" fill="#8a8362" />
        <path d="M965 322l64 14" strokeWidth="2.500" />
        <path d="M965 348l20-6 14 4-15 7z" fill="#c9c296" />
        <path d="M964 350l20 4-20 14z" fill="#6f6a50" />
        <path d="M597 370l147-53v90l-54-10-31 12v-20z" fill="url(#inWall)" stroke="none" />
        <path d="M595 371l85-31 64-23" strokeWidth="3" fill="none" />
        <path d="M595 371l85-31 64-23" stroke="#f3f0dc" fill="none" />
        <path d="M659 408l31-11 77 15 15-5 2 21-89 33h-12v21l-24-8z" fill="#fcf8d0" stroke="none" />
        <path d="M659 408l31-11 77 15 15-5" fill="none" />
        <path d="M690 337h3.500v60H690z" fill="#8d8a92" />
        <path d="M697 336v61" />

        {/* upper tower */}
        <path d="M741 294l76 17v90h-73z" fill="url(#darkWall)" />
        <path d="M817 310l45 11 8 70h-55z" fill="#dcd5aa" />
        <path d="M747 299l17 4v15l-17-3z" fill="#111" />
        <path d="M752 302l4 1v11l-4-1zM757 303l5 1v11l-5-1z" fill="#a59e70" />
        <path d="M827 320l14-4v59l-14 3z" fill="#6f3826" />
        <path d="M842 317h4v58h-4z" fill="#000" />
        <path d="M846 318l9 3v60l-9-4z" fill="#8a8362" />
        <path d="M855 321h7v57h-7z" fill="#8d8d92" stroke="none" />
        <path d="M862 321l35-13v76l-35-5z" fill="#a79f74" />
        <path d="M862 321l6-1v60h-6z" fill="#e4ddb4" stroke="none" />
        <path d="M868 317h4v63h-4z" fill="#000" />
        <path d="M872 316l21 4v65l-21-5z" fill="#3a211b" />
        <path d="M897 308l68-25v73l-8 8-60 22z" fill="#dcd5aa" />
        <path d="M957 287v76" />
        <path d="M741 287l104-37 120 27-103 38z" fill="#dfd8ae" />
        <path d="M741 287l121 28v6l-121-27z" fill="#8a8568" />
        <path d="M862 315l103-38v6l-103 38z" fill="#dcd5aa" />

        {/* stair box */}
        <path d="M697 335l47-18v29l-47-11" fill="#d9d2a6" />
        <path d="M697 335l70 17v60l-70-15z" fill="url(#darkWall)" />
        <path d="M767 352l50-18v62l-35 11-15 5z" fill="#dad3a8" />
        <path d="M697 335l70 17 50-18" strokeWidth="3" fill="none" />
        <path d="M697 335l70 17 50-18" stroke="#eee" fill="none" />

        {/* second box */}
        <path d="M782 391l55-18v30z" fill="#d9d2a6" />
        <path d="M837 373l56 12-48 19-8-2z" fill="#85805f" />
        <path d="M782 391l63 13v6l-63 20z" fill="#8a8461" />
        <path d="M845 404l-63-13 55-18 56 12" strokeWidth="3" fill="none" />
        <path d="M845 404l-63-13 55-18 56 12" stroke="#eee" fill="none" />
      </g>

      {/* rooftop railing */}
      <Bars x1={742} x2={844} top={[255, 218]} bottom={[287, 250]} n={30} w={2} />
      <Bars x1={844} x2={962} top={[218, 244]} bottom={[250, 277]} n={30} w={1.5} />
      <Bars x1={742} x2={816} top={[255, 272]} bottom={[287, 304]} n={17} w={2} />
      <Bars x1={836} x2={861} top={[276, 281]} bottom={[309, 315]} n={7} w={2} />
      <Bars x1={861} x2={962} top={[281, 244]} bottom={[315, 277]} n={27} w={2} />
      <path d="M817 272l-75-17 102-37 118 26-101 37-25-5" stroke="#111" strokeWidth="3" fill="none" />

      {/* long side wall */}
      <path d="M689 462l376-136v413L689 875z" fill="#dfd8af" stroke="#111" />
      <path d={`M689 ${726}L1065 589v150L689 875z`} fill="#dcd5ab" />
      <path d="M690 462l375-136" stroke="#111" strokeWidth="4" />
      <path d="M690 462l375-136" stroke="#f3f0dc" strokeWidth="1.600" />
      {pilasters.map(([a, b, w, w2]) => (
        <g key={a} stroke="#000">
          <path d={`M${a - 6} ${topY(a - 6) - 1}l6 -3 ${b - a + 2} -1`} fill="none" />
          <path d={`M${a} ${topY(a)}V${bandAt(720, 583, a)}`} strokeWidth={w} />
          <path d={`M${b} ${topY(b)}V${bandAt(720, 583, b)}`} strokeWidth={w2} />
        </g>
      ))}
      {[
        [522, 528, 385, 392],
        [614, 620, 477, 484],
        [720, 726, 583, 590],
      ].map(([l1, l2, r1, r2]) => (
        <path key={l1} d={`M689 ${l1}L1065 ${r1}V${r2}L689 ${l2}z`} fill="#dfd8af" stroke="#111" />
      ))}
      <path d="M695 462v60M695 528v86M695 620v98" stroke="#000" strokeWidth="2" />
      <path d="M1065 325v415" stroke="#000" strokeWidth="1.500" />

      {/* front: stair tower interior */}
      <path d="M476 392l120 26v342l-112-30-8-2z" fill="#cbc498" />
      <path d="M538 400l50 14v350l-50-12z" fill="#77735a" />
      <StairFloor y={490} h={92} />
      <StairFloor y={584} h={102} />
      <StairFloor y={700} h={52} />
      <path d="M484 460l52-16 52 12M484 470l52-16 52 12M500 478l60-24 27 14M540 480l20-30 26 24" stroke="#222" fill="none" />
      <path d="M570 484l18-6v20l-18-4z" fill="#e3dcb0" />
      <path d="M570 580l18-6v18l-18-4zM570 684l18-6v20l-18-4z" fill="#c05c32" />
      <Bars x1={485} x2={586} top={[394, 416]} bottom={[476, 498]} n={13} w={3} />
      <Bars x1={489} x2={582} top={[395, 415]} bottom={[476, 497]} n={12} w={1} color="#2a2a26" />
      <Bars x1={485} x2={586} top={[483, 505]} bottom={[568, 592]} n={13} w={3} />
      <Bars x1={489} x2={582} top={[483, 504]} bottom={[568, 591]} n={12} w={1} color="#2a2a26" />
      <Bars x1={485} x2={586} top={[575, 597]} bottom={[674, 697]} n={13} w={3} />
      <Bars x1={489} x2={582} top={[575, 596]} bottom={[674, 696]} n={12} w={1} color="#2a2a26" />
      <Bars x1={484} x2={587} top={[684, 703]} bottom={[728, 752]} n={15} w={3} />

      <g stroke="#111" strokeWidth="1" strokeLinejoin="round">
        {/* left column */}
        <path d="M476 392l7 2v280l-7-2z" fill="#9a9a9f" />
        <path d="M476 679l6 2v50l-6-3z" fill="#8a866c" />
        {/* front right wall */}
        <path d="M588 414l8 4v43l87 20v-20l6-1v415h-6V780l-95-22z" fill="#8b876c" />
        <path d="M689 462h6v60h-6z" fill="#e8e2bf" />
        {/* penthouse side */}
        <path d="M596 418l63-23v78l-63-13z" fill="#dcd5aa" />
        <path d="M603 416v45" strokeWidth="2" />
        <path d="M654 397v76" />
        <path d="M596 461l87 20v-20l7-2" strokeWidth="2.500" fill="none" />
        <path d="M596 460l87 20" stroke="#eee" />
        <path d="M476 384l62-23 121 28-63 23z" fill="#dfd8ae" />
        <path d="M476 384l120 28v6l-120-26z" fill="#8a866c" />
        <path d="M596 412l63-23v6l-63 23z" fill="#dfd8ae" />
      </g>

      <RoomWindow y={508} h={52} />
      <RoomWindow y={606} h={58} />
      <path d="M596 711l86 20v43l-86-20z" fill="#d8d1a0" stroke="#000" strokeWidth="2" />
      <path d="M664 760l18-6v18l-18-4z" fill="#c05c32" />
      <path d="M598 712v43M603 713v43M619 717v42M640 722v42M652 725v40M661 727v42M663 728v42" stroke="#000" strokeWidth="1.500" />

      {/* front slab bands */}
      <g fill="#8f8b70" stroke="#111">
        <path d="M476 474l112 25 101 23v6l-101-23-112-24z" />
        <path d="M476 566l112 26 101 22v6l-101-23-112-24z" />
        <path d="M476 672l112 25 101 23v6l-101-23-112-24z" />
        <path d="M482 728l106 24 95 22v6l-95-20-106-24z" />
      </g>

      {/* ground floor */}
      <path d="M482 732l106 25v32l-106-28z" fill="#8b876c" />
      <path d="M482 752l33 7v14l-33-8z" fill="#36221c" stroke="#111" />
      <path d="M518 744l70 16v30l-70-16z" fill="#77735a" />
      <Bars x1={519} x2={587} top={[745, 760]} bottom={[774, 789]} n={15} w={3} />
      <path d="M595 764l88 20v12l-58 6-30-9z" fill="#8b876c" stroke="#111" />
      <path d="M597 766l19 5v26l-19-5zM618 771l20 5v26l-20-5zM641 777l24 5v14h-24z" fill="#74422f" stroke="#111" />
      <path d="M600 770l13 3v22M621 775l14 3v22M644 780l18 4" fill="none" stroke="#111" />

      {/* yard walls */}
      <g stroke="#111" strokeWidth="1" strokeLinejoin="round">
        <path d="M411 750l64-22v38l-24-4z" fill="#d9d29f" />
        <path d="M474 728l7 1v39l-7-2z" fill="#f2efdf" />
        <path d="M411 750l64-22" strokeWidth="3" />
        <path d="M411 750l64-22" strokeWidth="1.200" stroke="#f3f0dc" />
        <path d="M411 750l214 48v99l-214-48z" fill="url(#stone)" />
        <path d="M428 754l33 7v11l-33-8z" fill="#9a9578" />
        <path d="M429 763l32 8v90l-32-8z" fill="#3d2a20" />
        <path d="M430 764v88M461 762v99" strokeWidth="2.500" />
        <path d="M508 772l4 1v98l-4-1z" fill="#f2efdf" />
        <path d="M512 773l108 24v11l-108-24z" fill="#9a9578" />
        <path d="M512 784l107 24v87l-107-24z" fill="url(#wood)" />
        {[1, 2, 3, 4, 5, 6].map((i) => (
          <path key={i} d={`M512 ${784 + i * 12.5}l107 24`} stroke="#1c0d08" />
        ))}
        <path d="M626 798l57-21v99l-57 21z" fill="url(#stoneR)" />
        <path d="M619 797l7 1v99l-7-2z" fill="url(#stone)" />
        <path d="M683 777l6-2v100l-6 2z" fill="#e8e2bf" />
        <path d="M634 796v98" />
        <path d="M411 750l214 48 64-23" strokeWidth="3.500" fill="none" />
        <path d="M411 750l214 48 64-23" strokeWidth="1.400" stroke="#f3f0dc" fill="none" />
        {/* base */}
        <path d="M411 849l214 48v7l-214-48z" fill="#a04f2f" />
        <path d="M625 897l503-184v7L625 904z" fill="#b9603a" />
      </g>

      {/* view cube */}
      <g stroke="#aaa" strokeWidth="0.800" shapeRendering="auto">
        <ellipse cx="1278" cy="320" rx="66" ry="25" fill="#f4f4f4" />
        <ellipse cx="1278" cy="319" rx="50" ry="18" fill="#fff" />
        <ellipse cx="1280" cy="317" rx="44" ry="16" fill="url(#cubeShade)" stroke="none" />
        <path d="M1243 266l34 8v51l-33-13z" fill="url(#cubeFace)" stroke="#888" />
        <path d="M1277 274l35-8-1 45-34 14z" fill="#d9d9d9" stroke="#888" />
        <path d="M1243 266l32-6 37 6-35 8z" fill="#efefef" stroke="#888" />
      </g>
      <g fill="#8c8c8c" fontSize="10" fontWeight="600" letterSpacing="0">
        <text transform="matrix(1 0.25 0 1.5 1246 301)" textLength="29" lengthAdjust="spacingAndGlyphs">FRONTAL</text>
        <text transform="matrix(1 -0.32 0 1.4 1280 305)" textLength="28" lengthAdjust="spacingAndGlyphs">DERECHA</text>
        <text transform="matrix(1 0.15 -0.8 0.4 1261 264)" fontSize="9" textLength="32" lengthAdjust="spacingAndGlyphs">SUPERIOR</text>
        <text transform="matrix(1.2 0.2 -0.6 0.6 1229 339)" fontSize="11">S</text>
        <text transform="matrix(1.2 -0.2 0.6 0.6 1323 335)" fontSize="11">E</text>
        <text transform="matrix(1.2 -0.2 0.6 0.6 1229 305)" fontSize="9">O</text>
        <text transform="matrix(1.2 0.2 -0.6 0.6 1315 300)" fontSize="9">N</text>
      </g>
    </svg>
  );
};

/* ---------- View window ---------- */

const RedX = () => <path d="M9 9l6 6M15 9l-6 6" stroke="#c1121f" strokeWidth="2.200" />;
const Bulb = ({ x = 12, y = 8 }) => (
  <g>
    <circle cx={x} cy={y} r="2.800" fill="#bfe0fb" stroke="#2a6fbf" />
    <path d={`M${x} ${y + 3}v3`} stroke="#2a6fbf" strokeWidth="2" />
  </g>
);

const viewControls = [
  <><path d="M1 2h14v11H1z" fill="#fff" strokeWidth="1.500" /><path d="M2 3h4l-2 3H2zM14 3h-4l2 3h2zM6 6h4v4H6zM2 13v-3l3 0 1 3zM14 13v-3h-3l-1 3z" fill="#555" stroke="none" /></>,
  <><path d="M1 6l4-4h10v7l-4 5H1z" fill="#4aa3e0" stroke="#174e86" /><path d="M1 6h10v8H1z" fill="#9be0c0" stroke="#174e86" /><path d="M3 9h6M3 11h6" stroke="#174e86" /></>,
  <><circle cx="7" cy="7" r="4" fill="#fff3c4" stroke="#e39a00" strokeWidth="1.500" /><path d="M7 0v2M0 7h2M2 2l1 1M12 2l-1 1M2 12l1-1" stroke="#e39a00" /><RedX /></>,
  <><circle cx="8" cy="6" r="4.500" fill="#cfe6fb" stroke="#2a6fbf" /><path d="M3 13h6" stroke="#2a6fbf" strokeWidth="2" /><RedX /></>,
  <><path d="M0 5l3-1M4 3h6l2 3-3 7H5L3 6zM4 3c0-2 5-2 6 0" fill="#eee" /><Bulb x={13} y={8} /></>,
  <><path d="M4 5v6M1 9h4M4 5h11M12 5v6M1 9v3" stroke="#174e86" strokeWidth="1.800" /><path d="M7 8h6v4H7z" stroke="#2a6fbf" fill="#cfe6fb" /><path d="M3 7v4" stroke="#c1121f" /></>,
  <><path d="M4 3v9M1 9h4M4 5h7M7 5v7M1 9v3" stroke="#174e86" strokeWidth="1.600" /><path d="M3 7v4" stroke="#c1121f" /><Bulb x={12} y={6} /></>,
  <><path d="M2 7l6-5 6 4v8l-6 1-6-3z" fill="#eee" /><path d="M2 7l4 2v5" /><rect x="7" y="9" width="7" height="5" fill="#bfe3c8" /><path d="M8.500 9V7h4v2" /></>,
  <><path d="M1 4c1-2 3-1 4 1s2 3 4 2M15 4c-1-2-3 0-4 2" /><circle cx="5.500" cy="8" r="2.500" fill="#fff" /><circle cx="11" cy="9.500" r="2.500" fill="#fff" /></>,
  <><Bulb x={8} y={6} /></>,
  <><path d="M2 3h9v9H2z" strokeDasharray="2 1.500" strokeWidth="2" /><path d="M8 8h6v6H8z" fill="#fff" /><path d="M10 10h2v2" /></>,
  <><path d="M1 5l8-3v9l-8 3zM1 8l8-3M4 4v9M7 3v9" stroke="#555" fill="#e4b3b3" /><path d="M1 11l8-3" stroke="#c1121f" strokeWidth="1.500" /><Bulb /></>,
  <><path d="M2 6l4-4 8 1v7l-4 4H2z" fill="#ddd" /><path d="M2 6h8l4-3M10 6v8M5 6v8" /></>,
  <><path d="M2 1v14M14 1v6" /><path d="M2 4h12" /><path d="M2 12h6" strokeDasharray="2 1" /><rect x="9" y="9" width="6" height="5" fill="#888" /><path d="M10.500 9V7h3v2" /></>,
];

const ViewWindow = () => (
  <div className="ml-[2px] flex h-[814px] w-[1161px] shrink-0 flex-col bg-white">
    <div className="flex h-[20px] items-center bg-[#c9c9c9]">
      <div className="flex w-[128px] items-center pt-px pl-[5px] text-[#555]">
        <House size={16} faded />
        <span className="ml-[7px]">3D IE</span>
      </div>
      <div className="flex h-[20px] w-[128px] items-center bg-white pt-px pr-[4px] pl-[5px] font-bold text-[#333]">
        <House size={16} />
        <span className="ml-[7px] tracking-[-0.300px]">Vista 3D 1</span>
        <Cross className="ml-auto size-[11px]" />
      </div>
      <svg viewBox="0 0 9 8" className="mr-[6px] ml-auto h-[7px] w-[8px]">
        <path d="M0 1h9" stroke="#333" strokeWidth="1.500" />
        <path d="M0.500 3.500h8L4.500 8z" fill="#333" />
      </svg>
    </div>
    <div className="flex h-[775px]">
      <div className="h-[775px] w-[1143px]">
        <Building />
      </div>
      <div className="flex w-[15px] flex-col items-center bg-[#f0f0f0]">
        <Chevron dir="up" className="mt-[5px] size-[11px]" />
        <div className="mt-[364px] h-[17px] w-[15px] bg-[#c9c9c9]" />
        <Chevron dir="down" className="mt-auto mb-[3px] size-[11px]" />
      </div>
    </div>
    <div className="flex h-[17px] items-center">
      <div className="w-[81px] pl-[25px] tracking-[-0.2px] text-black">1 : 100</div>
      <div className="flex w-[289px] justify-between">
        {viewControls.map((c, i) => (
          <Svg key={i}>{c}</Svg>
        ))}
      </div>
      <div className="ml-[6px] flex h-[15px] flex-1 items-center bg-[#efefef]">
        <Chevron dir="left" className="size-[11px]" />
        <div className="ml-[361px] h-[15px] w-[17px] bg-[#c9c9c9]" />
        <Chevron dir="right" className="mr-[3px] ml-auto size-[11px]" />
      </div>
      <svg viewBox="0 0 10 10" className="mx-[4px] size-[10px] text-[#aaa]">
        <path d="M7 1h2v2H7zM4 4h2v2H4zM7 4h2v2H7zM1 7h2v2H1zM4 7h2v2H4zM7 7h2v2H7z" fill="currentColor" />
      </svg>
    </div>
  </div>
);

/* ---------- Project browser ---------- */

const tree = [
  [0, "Vistas (todo)", "-", "views"],
  [1, "Planos estructurales", "+"],
  [1, "Planos de planta", "-"],
  [2, "Planimetría general"],
  [2, "PLANTA - 1° NIVEL"],
  [2, "PLANTA - 2° NIVEL"],
  [2, "PLANTA - 3° NIVEL"],
  [2, "PLANTA DE AZOTEA"],
  [2, "PLANTA DE TECHO"],
  [2, "PLANTA-CIMIENTO"],
  [1, "Planos de techo", "+"],
  [1, "Vistas 3D", "-"],
  [2, "3D-ESTRUCTURAS"],
  [2, "3D-TIPO DE CONCRETO"],
  [2, "INTERIOR COCINA"],
  [2, "INTERIOR DORMITORIO"],
  [2, "INTERIOR SALA"],
  [2, "Vista 3D 1"],
  [2, "Vista 3D 2"],
  [2, "Vista 3D 3"],
  [2, "{3D}"],
  [1, "Alzados (Alzado 1)", "-"],
  [2, "ELEVACION FRONTAL"],
  [2, "ELEVACION POSTERIOR"],
  [2, "ELEVACIÓN LATERAL DERECHA"],
  [2, "ELEVACIÓN LATERAL IZQUIERDA"],
  [1, "Secciones (Sección 1)", "+"],
  [1, "Renderizaciones", "+"],
  [0, "Leyendas", "", "legend"],
  [0, "Tablas de planificación/Cantidades (todo)", "-", "table"],
  [1, "METRADO DE COLUMNAS"],
  [1, "METRADO DE VIGAS"],
  [0, "Planos (todo)", "-", "sheet"],
  [1, "1 - PLANTA DE ARQUITECTURA 1-2", "+"],
  [1, "2 - PLANTA DE ARQUITECTURA - AZOTEA TECHO", "+"],
  [1, "3 - CORTES DE ARQUITECTURA", "+"],
  [1, "5 - ELEVACIONES DE ARQUITECTURA", "+"],
  [1, "7 - 3D MAQUETA DIGITAL", "+"],
  [1, "8 - VISTAS DE RENDERS EXTERIORES", "+"],
  [1, "9 - VISTAS DE RENDERS INTERIORES", "+"],
  [1, "10 - TABLAS DE PLANIFICACIÓN", "+"],
  [0, "Familias", "+", "family"],
  [0, "Grupos", "+", "group"],
  [0, "Vínculos de Revit", "", "link"],
];

const treeIcons = {
  views: <path d="M4 1H1v3M12 1h3v3M4 15H1v-3M12 15h3v-3M5 6l2-2h5v6l-2 2H5z" />,
  legend: (
    <>
      <rect x="1" y="1" width="14" height="14" fill="#f4f4f4" />
      <path d="M1 2.500h14" strokeWidth="2.500" />
      <path d="M3 7h3v2H3zM8 7h6M8 9h4M3 12h3M8 12h5" strokeWidth="1.200" />
    </>
  ),
  table: (
    <>
      <rect x="1" y="2" width="14" height="12" fill="#f4f4f4" />
      <path d="M1 3.500h14" strokeWidth="2.500" />
      <path d="M5 4v10M1 8h14M1 11h14M10 4v10" strokeWidth="1" stroke="#999" />
    </>
  ),
  sheet: (
    <>
      <path d="M1 2h10l4 4v8H1z" fill="#f4f4f4" />
      <path d="M11 2v12M3 8V6h6v6H7M3 12v-3h3v3z" />
    </>
  ),
  family: <path d="M2 1h5v6H2zM10 1h4v13H2v-4h8z" fill="#f0f0f0" />,
  group: (
    <>
      <path d="M4 1H2v14h2M12 1h2v14h-2" />
      <circle cx="7" cy="6.500" r="3" fill="#ddd" />
      <path d="M7 6h5v6H7z" fill="#cfd3db" />
    </>
  ),
  link: (
    <g stroke="#c99700" strokeWidth="2">
      <rect x="1" y="6.500" width="7" height="4" rx="2" fill="#ffe27a" />
      <rect x="8" y="6.500" width="7" height="4" rx="2" fill="#ffe27a" />
      <path d="M5 8.500h6" stroke="#7a5a00" strokeWidth="1" />
    </g>
  ),
};

// one column of the tree guides: v = "full" | "half" | "below" | none
const Guide = ({ w = 21, v, h, box }) => (
  <svg width={w} height="18" className="shrink-0" stroke="#9a9a9a" fill="none" shapeRendering="crispEdges">
    {v && (
      <path
        d={v === "full" ? "M10.500 0v18" : v === "half" ? "M10.500 0v10" : "M10.500 10v8"}
        strokeDasharray="1 1"
      />
    )}
    {h && <path d={`M11 10.500h${w - 12}`} strokeDasharray="1 1" />}
    {box && (
      <>
        <rect x="6.500" y="6.500" width="8" height="8" fill="#fff" stroke="#8d96a8" />
        <path d={box === "+" ? "M8 10.500h5M10.500 8v5" : "M8 10.500h5"} stroke="#26376b" />
      </>
    )}
  </svg>
);

const TreeRow = ({ item, index }) => {
  const [level, label, box, icon] = item;
  const next = tree[index + 1];
  const last = index === tree.length - 1;
  const rest = tree.slice(index + 1);
  const end = rest.findIndex((r) => r[0] === 0);
  const moreL1 = rest.slice(0, end < 0 ? 0 : end).some((r) => r[0] === 1);
  return (
    <div className="flex h-[18px] items-center text-[#1a1a1a]">
      <Guide v={last ? "half" : index === 0 ? "below" : "full"} h={level === 0} box={level === 0 && box} />
      {level === 0 && <Svg className="ml-[1px]">{treeIcons[icon]}</Svg>}
      {level === 1 && <Guide w={25} v={moreL1 ? "full" : "half"} h box={box} />}
      {level === 2 && (
        <>
          <Guide v="full" />
          <Guide w={25} v={next && next[0] === 2 ? "full" : "half"} h />
        </>
      )}
      <span
        className={`flex h-[17px] items-center whitespace-nowrap ${
          index === 0 ? "ml-[4px] bg-[#e2e2e0] px-[2px]" : level === 0 ? "ml-[6px]" : "ml-[2px]"
        } ${label === "Vista 3D 1" ? "font-bold" : ""} ${
          /^\d+ - /.test(label)
            ? "tracking-[-0.230px]"
            : /^[^a-z]*$/.test(label)
              ? "tracking-[-0.400px]"
              : "tracking-[-0.370px]"
        }`}
      >
        {label}
      </span>
    </div>
  );
};

const ProjectBrowser = () => (
  <div className="ml-[2px] flex h-[814px] w-[507px] shrink-0 flex-col bg-white">
    <div className="flex h-[20px] items-center justify-between bg-[#eee] pt-[2px] pr-[3px] pl-[4px] tracking-[-0.250px] text-[#444]">
      <span>Navegador de proyectos - Arquitectura Sola</span>
      <Cross className="size-[11px]" />
    </div>
    {tree.map((item, i) => (
      <TreeRow key={i} item={item} index={i} />
    ))}
  </div>
);

/* ---------- Status bar ---------- */

const Arrow = () => <path d="M8 5v10l2.500-2 2 3 1-1-1.500-3H15z" fill="#fff" stroke="#333" strokeWidth="0.900" />;

const StatusBar = () => (
  <div className="flex h-[27px] shrink-0 items-center pb-[2px] pl-[5px] text-[#222]">
    <span className="w-[845px] tracking-[-0.370px]">
      Clic para seleccionar, TAB para alternar, CTRL para añadir y MAYÚS para anular una selección.
    </span>
    <Svg>
      <path d="M1 7l4-1 3 1v7l-4 1-3-1z" fill="#9fd0f5" stroke="#1f62ad" />
      <path d="M5 6V3l3-2 4 2v4H8v5" fill="#c6ecc0" stroke="#2f7d32" />
      <path d="M13 8v7" strokeWidth="3" />
      <path d="M11 5v2.500h4V5M13 8v7" stroke="#456" />
    </Svg>
    <div className="ml-[8px] flex h-[18px] w-[204px] items-center justify-end bg-white pr-[2px]">
      <Chevron dir="down" color="#aaa" className="size-[11px]" />
    </div>
    <Svg className="ml-[8px] opacity-60">
      <path d="M4 2h9l2 4H6zM6 6l-5 9h5l3-9" fill="#ddd" />
    </Svg>
    <span className="ml-[5px] w-[33px]">:0</span>
    <Svg>
      <path d="M1 1h14v14H1z" fill="#fff" strokeWidth="1.400" />
      <path d="M1 3h14M4 7h2M7 7h5M6 11h2M9 11h4M5 7v4" strokeWidth="1.300" />
    </Svg>
    <Svg className="ml-[10px] opacity-50">
      <path d="M1 2h14v12H1z" fill="#777" stroke="none" />
      <Arrow />
    </Svg>
    <div className="ml-[8px] flex h-[18px] w-[205px] items-center justify-between bg-white pr-[3px] pl-[3px] text-[#777]">
      <span>Modelo base</span>
      <Chevron dir="down" color="#aaa" className="size-[11px]" />
    </div>
    <div className="ml-[231px] flex w-[171px] justify-between">
      <Svg>
        <path d="M1 3h6v4H1zM8 3h6v4H8z" stroke="#c99700" fill="#ffe27a" strokeWidth="1.800" />
        <Arrow />
      </Svg>
      <Svg>
        <path d="M1 9l6-7h3L8 9zM1 13h7" stroke="#1f62ad" fill="#cfe6fb" />
        <path d="M10 1l4 4M14 1l-4 4" stroke="#c1121f" strokeWidth="2" />
        <Arrow />
      </Svg>
      <Svg>
        <path d="M3 1h8v5l2 3H1l2-3zM6 9v6" fill="#f6b07a" stroke="#b6521c" />
        <Arrow />
      </Svg>
      <Svg>
        <path d="M2 4l6-3v11l-6 3z" fill="#9fd0f5" stroke="#1f62ad" />
        <path d="M10 1l4 4M14 1l-4 4" stroke="#c1121f" strokeWidth="2" />
        <Arrow />
      </Svg>
      <Svg>
        <path d="M5 0v9M0 4.500h9M3.500 1.500L5 0l1.500 1.500M1.500 3L0 4.500 1.500 6" strokeWidth="1.500" stroke="#222" />
        <Arrow />
      </Svg>
      <Svg>
        <circle cx="8" cy="8" r="5" stroke="#aaa" strokeWidth="2.500" strokeDasharray="3 1" />
      </Svg>
      <Svg>
        <path d="M1 2h14l-5 6v7l-4-2V8z" fill="#ddd" />
      </Svg>
    </div>
    <span className="ml-px">:0</span>
  </div>
);

/* ---------- Taskbar ---------- */

const appIcons = [
  {
    name: "taskview",
    svg: (
      <g stroke="#eee" fill="none" strokeWidth="1.400">
        <path d="M4 4v3h10V4M4 20v-3h10v3M4 9.500h10v5H4zM18 4v16" />
        <path d="M18 8v4" strokeWidth="3" />
      </g>
    ),
  },
  {
    name: "edge",
    open: true,
    svg: (
      <>
        <circle cx="12" cy="12" r="12" fill="#1f8fd8" />
        <path d="M1 9C4 0 21-2 24 11c0 4-4 6-8 5-2-1 1-3-1-6S5 4 1 9z" fill="#4fd07a" />
        <path d="M1 9c4-5 11-4 13-1-6-1-8 5-6 9s6 6 11 5C12 26 0 22 0 12z" fill="#1468b8" />
        <path d="M15 10c2 3-1 5 1 6s5 1 7-1c-1 3-5 5-9 4s-5-7 1-9z" fill="#2b2622" />
      </>
    ),
  },
  {
    name: "folder",
    open: true,
    svg: (
      <>
        <path d="M1 3h8l2 2h12v16H1z" fill="#e8a82a" />
        <path d="M1 7h22v14H1z" fill="#ffd86b" />
        <path d="M5 21v-7h14v7h-4v-4H9v4z" fill="#3f8fd6" />
      </>
    ),
  },
  {
    name: "store",
    svg: (
      <>
        <path d="M8 6V2h8v4" fill="none" stroke="#3ba7e0" strokeWidth="2" />
        <path d="M1 5h22v16a2 2 0 01-2 2H3a2 2 0 01-2-2z" fill="#f7f7f7" />
        <path d="M7 9h4.500v4.500H7z" fill="#f25022" />
        <path d="M12.500 9H17v4.500h-4.500z" fill="#7fba00" />
        <path d="M7 14.500h4.500V19H7z" fill="#00a4ef" />
        <path d="M12.500 14.500H17V19h-4.500z" fill="#ffb900" />
      </>
    ),
  },
  {
    name: "acrobat",
    open: true,
    svg: (
      <>
        <rect x="1" y="1" width="22" height="22" rx="4" fill="#06122e" />
        <path
          d="M11 5c2-1 2 3 0 6-1 3-3 6-5 7-1-1 3-4 8-5 3-1 5 0 4 1-2 1-7-4-7-9z"
          stroke="#fff"
          strokeWidth="1.300"
          fill="none"
        />
      </>
    ),
  },
  { name: "spotify", open: true },
  {
    name: "chrome",
    open: true,
    svg: (
      <>
        <circle cx="12" cy="12" r="12" fill="#fbc116" />
        <path d="M12 12L1.600 6A12 12 0 0122.400 6H12z" fill="#e33b2e" />
        <path d="M12 12L1.600 6A12 12 0 0011 24l6-9z" fill="#2a9d48" />
        <circle cx="12" cy="12" r="5.800" fill="#fff" />
        <circle cx="12" cy="12" r="4.500" fill="#3f7de8" />
      </>
    ),
  },
  {
    name: "mail",
    open: true,
    svg: (
      <>
        <path d="M0 9l12-8 12 8v14H0z" fill="#0f5fb0" />
        <path d="M3 8h18v9H3z" fill="#f2f2f2" />
        <path d="M0 9l12 8 12-8v14H0z" fill="#2ba3e8" />
        <path d="M0 23l12-9 12 9z" fill="#4dbdf5" />
      </>
    ),
  },
  {
    name: "ppt",
    svg: (
      <>
        <circle cx="13" cy="12" r="11" fill="#e2593a" />
        <path d="M13 1a11 11 0 0111 11H13z" fill="#f39478" />
        <rect x="0" y="6" width="12" height="12" rx="1" fill="#c43e1c" />
        <text x="3" y="16" fontSize="10.500" fontWeight="700" fill="#fff">P</text>
      </>
    ),
  },
  {
    name: "sketchup",
    svg: (
      <>
        <rect width="24" height="24" fill="#eaf0f6" />
        <path
          d="M5 8l7-4 7 3v9l-6 4v-6l-8-4M9 8l4-2 3 2v6M5 13l5 3v4l-5-3z"
          fill="none"
          stroke="#1f5fa8"
          strokeWidth="2"
        />
      </>
    ),
  },
  {
    name: "ps",
    svg: (
      <>
        <rect x="1.500" y="1.500" width="21" height="20" rx="4" fill="#021d2c" stroke="#31a8e0" strokeWidth="1.500" />
        <text x="5" y="16" fontSize="12" fontWeight="700" fill="#d6efff">Ps</text>
      </>
    ),
  },
  {
    name: "s10",
    svg: (
      <>
        <rect width="24" height="24" fill="#4d7890" stroke="#9ab6c4" />
        <path d="M2 15c8 0 14-4 19-12M10 11C7 8 8 6 9 4M14 10c3 1 5 0 7-1" stroke="#dfeaf0" strokeWidth="2" fill="none" />
        <text x="8.500" y="22" fontSize="9" fontWeight="700" fill="#fff">8</text>
      </>
    ),
  },
  {
    name: "autocad",
    open: true,
    svg: (
      <>
        <rect width="24" height="24" fill="#f5eeee" />
        <path d="M4 20L9 4h5l6 16h-4l-1-4H9l-1 4zM10 13h4l-2-6z" fill="#c4262e" />
      </>
    ),
  },
  {
    name: "photos",
    open: true,
    svg: (
      <>
        <rect x="1" y="1" width="22" height="22" fill="#2f8fe8" />
        <path d="M1 14l7-6 15 15H1z" fill="#0f3f86" />
        <path d="M12 13l5-4 6 6v8z" fill="#7aa9e8" />
        <circle cx="17" cy="6" r="2" fill="#fff" />
      </>
    ),
  },
  {
    name: "revit",
    open: true,
    active: true,
    svg: (
      <>
        <rect width="24" height="24" fill="#e6edf6" />
        <path d="M7 3h4v17H7zM13 12l6 8h-4l-4-7z" fill="#2567a8" />
        <path d="M10 4.500h4a3 3.500 0 010 7.500h-4" fill="none" stroke="#3f7fc0" strokeWidth="3" />
      </>
    ),
  },
];

const Taskbar = () => (
  <div className="flex h-[40px] shrink-0 bg-[linear-gradient(90deg,#40392c_0px,#3b2f26_400px,#332922_620px,#2a2a28_900px,#2b3036_1100px,#343537_1300px,#2a302b_1370px,#2c312b_1480px,#46392f_1600px,#4a3a2f_1720px,#404047_1800px,#47474c_1920px)] text-white">
    <div className="flex w-[48px] items-center justify-center">
      <FaWindows size={17} />
    </div>
    <div className="flex w-[344px] items-center border border-[#999] bg-[#f2f2f2] pl-[12px] text-[15px] tracking-[-0.550px] text-[#444]">
      <svg viewBox="0 0 18 18" className="size-[17px]" fill="none" stroke="#222" strokeWidth="1.400">
        <circle cx="11" cy="7" r="5.500" />
        <path d="M7 11l-6 6" />
      </svg>
      <span className="ml-[10px]">Escribe aquí para buscar</span>
    </div>
    <div className="flex">
      {appIcons.map((app) => (
        <div
          key={app.name}
          className={`flex h-[40px] w-[49.1px] flex-col items-center pt-[8px] ${app.active ? "bg-[#54575c]" : ""}`}
        >
          {app.svg ? (
            <svg viewBox="0 0 24 24" className="size-[24px]" fontFamily="Open Sans, sans-serif">
              {app.svg}
            </svg>
          ) : (
            <div className="flex size-[24px] items-center justify-center rounded-full bg-black text-[#1ed760]">
              <FaSpotify size={24} />
            </div>
          )}
          {app.open && <div className={`mt-auto h-[2px] bg-[#76b0e0] ${app.active ? "w-[49px]" : "w-[40px]"}`} />}
        </div>
      ))}
    </div>
    <div className="ml-auto flex items-center pr-[4px] text-[14.500px] tracking-[-0.500px]">
      <svg viewBox="0 0 26 22" className="h-[21px] w-[26px]">
        <path d="M6 21a5 5 0 010-11 7 7 0 0113-1 6 6 0 011 12z" fill="#b9cdf0" />
        <circle cx="21.500" cy="4" r="3.500" fill="#c4262e" />
      </svg>
      <span className="ml-[6px] w-[38px]">23°C</span>
      <span className="w-[62px]">Nublado</span>
      <Chevron dir="up" color="#eee" className="ml-[3px] size-[15px]" />
      <svg viewBox="0 0 16 18" className="ml-[9px] h-[17px] w-[15px]" fill="none" stroke="#eee" strokeWidth="1.200">
        <path d="M3 5h7v8H3zM10 8l3-1.500v5L10 10M4 2c2-1.500 6-1.500 8 0M4 16c2 1.500 6 1.500 8 0" />
      </svg>
      <svg viewBox="0 0 16 16" className="ml-[11px] size-[14px]" fill="none" stroke="#ddd" strokeWidth="1.200">
        <path d="M2 15C2 8 8 2 15 2M6 15c0-5 4-9 9-9M10 15c0-3 2-5 5-5" />
        <circle cx="13.500" cy="14" r="1.300" fill="#ddd" />
      </svg>
      <svg viewBox="0 0 18 16" className="ml-[7px] h-[15px] w-[17px]" fill="none" stroke="#eee" strokeWidth="1.200">
        <path d="M1 6h3l4-4v12l-4-4H1zM10 5.500c1 1.500 1 3.500 0 5M12.500 4c2 2.500 2 5.500 0 8" />
        <path d="M15 2c2.500 3.500 2.500 8.500 0 12" stroke="#888" />
      </svg>
      <span className="ml-[12px] w-[28px] text-[12px] tracking-[-0.750px]">ESP</span>
      <div className="ml-[4px] w-[72px] text-center text-[12px] leading-[18px] tracking-[-0.450px]">
        <div>14:47</div>
        <div>16/12/2022</div>
      </div>
      <div className="relative ml-[14px] size-[28px]">
        <svg viewBox="0 0 20 20" className="mt-[4px] size-[19px]">
          <path d="M2 1h15v13H9l-4 4v-4H2z" fill="#fff" />
          <path d="M5 5h9M5 8h9M5 11h5" stroke="#47474c" strokeWidth="1.300" />
        </svg>
        <div className="absolute top-[12px] left-[7px] flex size-[16px] items-center justify-center rounded-full border border-[#999] bg-[#333] text-[11px] leading-none">
          6
        </div>
      </div>
      <div className="ml-[5px] h-[40px] w-px bg-[#777]" />
    </div>
  </div>
);

/* ---------- App ---------- */

const App = () => (
  <div className="flex h-[1080px] w-[1920px] flex-col overflow-hidden bg-white font-['Open_Sans','Noto_Sans',sans-serif] text-[12px] leading-[16px] tracking-[-0.370px]">
    <Grad />
    <div className="flex h-[1019px]">
      <div className="relative z-10 flex h-[1019px] w-[1900px] shrink-0 flex-col bg-[#cbcbcb] shadow-[0_2px_16px_rgba(0,0,0,0.45)]">
        <TitleBar />
        <RibbonTabs />
        <Ribbon />
        <div className="ml-[4px] h-[26px] w-[1893px] shrink-0 bg-[#eee]" />
        <div className="h-[2px] shrink-0 bg-[#c8c8c8]" />
        <div className="flex h-[814px] shrink-0 pl-[3px]">
          <Properties />
          <ViewWindow />
          <ProjectBrowser />
        </div>
        <StatusBar />
      </div>
      <div className="relative z-20 flex w-[20px] flex-col items-center pt-[26px]">
        <div className="flex size-[16px] items-center justify-center rounded-full bg-[#0a62b0] text-[11px] leading-none font-bold text-white">
          ?
        </div>
        <div className="mt-[102px] flex h-[29px] w-[10px] items-center self-start border border-l-0 border-[#bbb] text-[10px] text-[#555]">
          ...
        </div>
      </div>
    </div>
    <div className="flex h-[21px] shrink-0 items-center pl-[14px] text-[#1e395b]">
      <span className="relative z-20 w-[74px] tracking-[-0.450px]">4 elementos</span>
      <div className="h-[14px] w-px bg-[#ddd]" />
      <span className="relative z-20 ml-[10px] w-[137px] tracking-[-0.370px]">1 elemento seleccionado</span>
      <span className="relative z-20 w-[52px] tracking-[-0.500px]">23.4 MB</span>
      <div className="h-[14px] w-px bg-[#ddd]" />
      <div className="relative z-20 ml-auto flex h-[21px] w-[22px] items-center justify-center border border-[#26a0da] bg-[#cbe8f6]">
        <svg viewBox="0 0 16 14" className="h-[13px] w-[16px]" stroke="#456" fill="none">
          <path d="M1 1h3v3H1zM1 6h3v3H1zM1 10.500h3v3H1zM6 2.500h4M11.500 2.500h4M6 7.500h4M11.500 7.500h4M6 12h4M11.500 12h4" />
        </svg>
      </div>
      <div className="relative z-20 mr-[7px] ml-[4px] h-[11px] w-[14px] border border-[#678] bg-gradient-to-b from-[#bfe0fb] to-[#245d86]" />
    </div>
    <Taskbar />
  </div>
);

export default App;
